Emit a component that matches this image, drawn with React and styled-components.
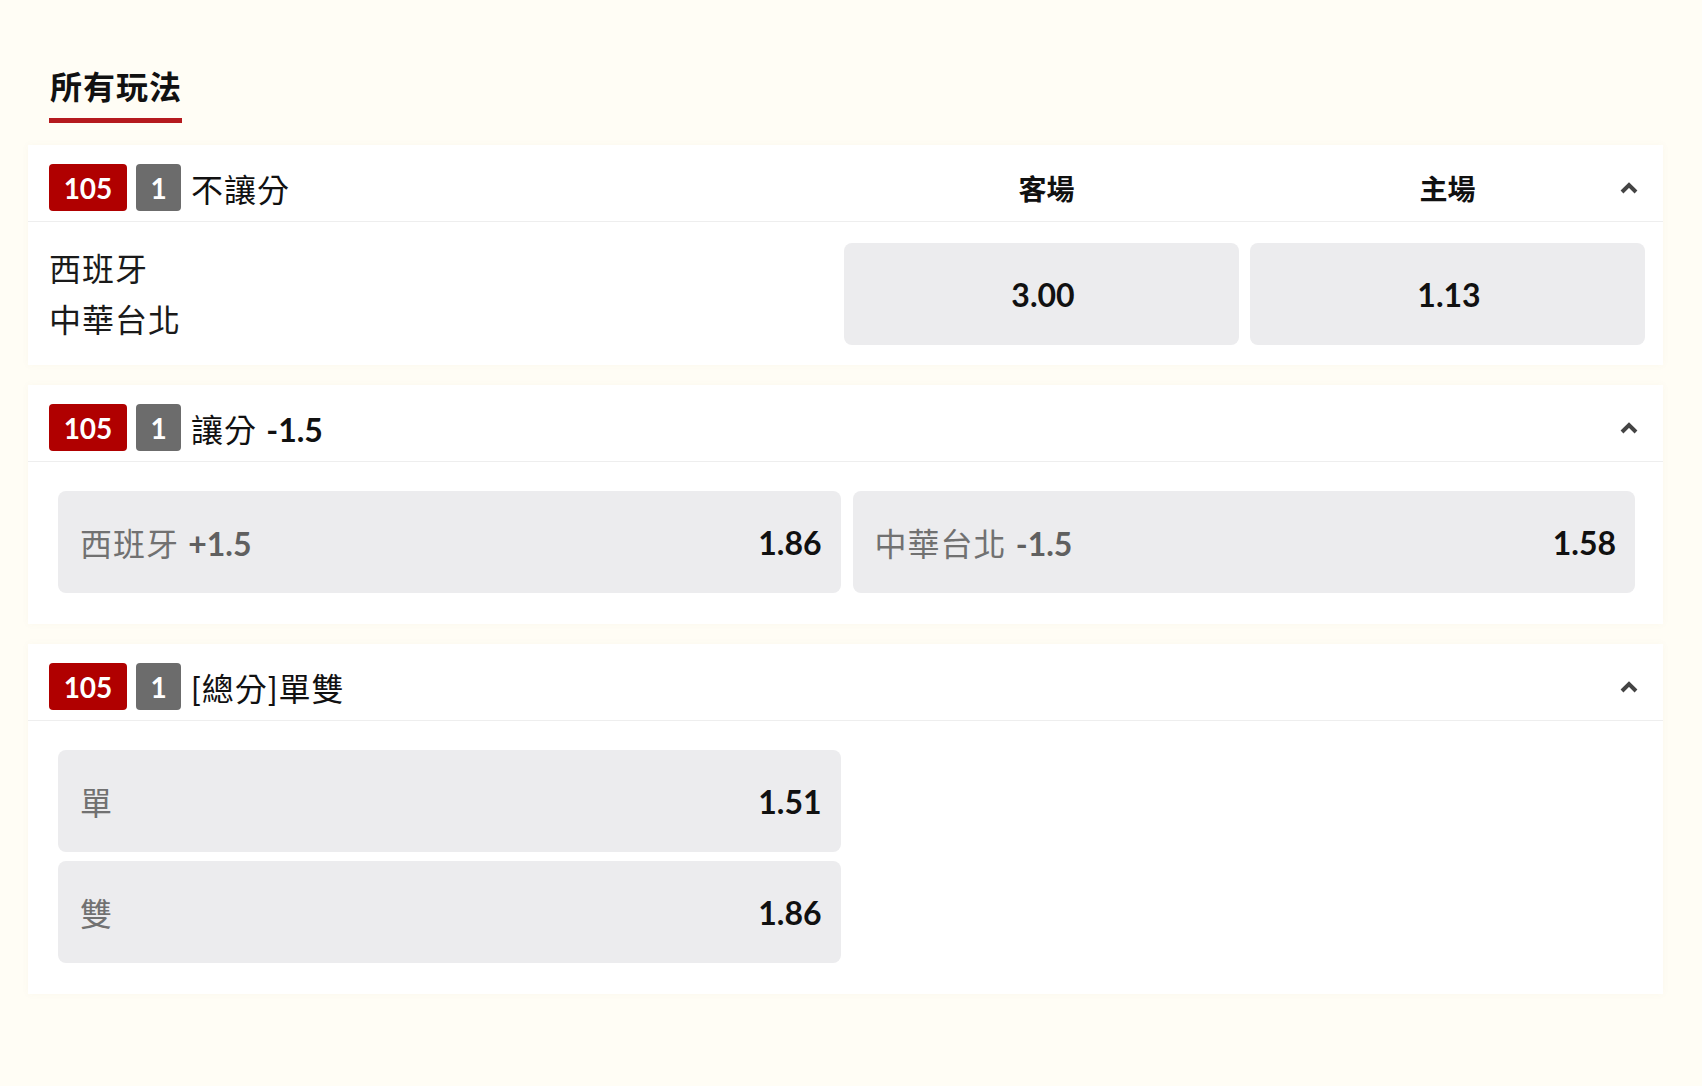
import React from 'react';
import styled, { createGlobalStyle } from 'styled-components';

const GlobalStyle = createGlobalStyle`
  body {
    margin: 0;
    background: #fffdf5;
    font-family: Lato, "Noto Sans CJK TC", sans-serif;
    color: #111;
  }
`;

const Page = styled.div`
  min-height: 100vh;
  box-sizing: border-box;
  padding: 67px 39px 40px 28px;
  display: flex;
  flex-direction: column;
  gap: 20px;
`;

const TabBar = styled.div`
  padding-left: 21px;
  margin-bottom: 2px;
`;

const Tab = styled.div`
  display: inline-block;
  padding: 0 0 11px 1px;
  font-size: 32px;
  line-height: 40px;
  font-weight: 700;
  letter-spacing: 1px;
  color: #111;
  border-bottom: 5px solid #b51a1e;
`;

const Card = styled.section`
  background: #fff;
  box-shadow: 0 0 8px rgba(120, 100, 40, 0.04);
`;

const Header = styled.div`
  display: grid;
  grid-template-columns: ${(p) => p.$cols};
  column-gap: 11px;
  align-items: center;
  padding: 19px 18px 10px 21px;
  border-bottom: 1px solid #eeeeee;
`;

const TitleWrap = styled.div`
  grid-column: 1;
  grid-row: 1;
  display: flex;
  align-items: center;
  gap: 9px;
`;

const Badge = styled.span`
  display: inline-flex;
  align-items: center;
  justify-content: center;
  height: 47px;
  min-width: ${(p) => p.$w}px;
  border-radius: 4px;
  background: ${(p) => (p.$grey ? '#6c6c6c' : '#b00000')};
  color: #fff;
  font-family: Lato, sans-serif;
  font-weight: 700;
  font-size: 28px;
`;

const Title = styled.span`
  margin-left: 1px;
  font-size: 32px;
  font-weight: 400;
  letter-spacing: 1px;
  color: #111;
  b {
    font-family: Lato, sans-serif;
    font-weight: 700;
    letter-spacing: 0;
  }
`;

const ColLabel = styled.div`
  grid-row: 1;
  grid-column: ${(p) => p.$col};
  padding-left: ${(p) => p.$shift || 0}px;
  text-align: center;
  font-size: 28px;
  font-weight: 700;
  color: #111;
`;

const Chevron = styled.svg`
  grid-row: 1;
  grid-column: ${(p) => p.$col};
  justify-self: end;
  margin-right: 6px;
  width: 20px;
  height: 14px;
`;

const MatchBody = styled.div`
  display: grid;
  grid-template-columns: 1fr 395px 395px;
  column-gap: 11px;
  align-items: center;
  padding: 21px 18px 20px 21px;
`;

const Teams = styled.div`
  display: flex;
  flex-direction: column;
  gap: 3px;
  font-size: 32px;
  line-height: 48px;
  letter-spacing: 1px;
  color: #1a1a1a;
`;

const OddsGrid = styled.div`
  display: grid;
  grid-template-columns: 1fr 1fr;
  column-gap: 12px;
  row-gap: 9px;
  padding: 29px 28px 31px 30px;
`;

const OddsButton = styled.button`
  all: unset;
  box-sizing: border-box;
  grid-column: ${(p) => p.$col || 'auto'};
  height: 102px;
  display: flex;
  align-items: center;
  justify-content: ${(p) => (p.$center ? 'center' : 'space-between')};
  padding: 0 19px 0 22px;
  border-radius: 8px;
  background: #ececee;
  cursor: pointer;
`;

const Label = styled.span`
  font-size: 32px;
  letter-spacing: 1px;
  color: #717171;
  b {
    font-family: Lato, sans-serif;
    font-weight: 700;
    letter-spacing: 0;
    color: #606060;
  }
`;

const Price = styled.span`
  font-family: Lato, sans-serif;
  font-weight: 700;
  font-size: 32px;
  color: #111;
`;

function Up({ col }) {
  return (
    <Chevron $col={col} viewBox="0 0 20 14">
      <polyline points="3,11 10,4 17,11" fill="none" stroke="#444" strokeWidth="4" strokeLinejoin="miter" />
    </Chevron>
  );
}

function MarketTitle({ children }) {
  return (
    <TitleWrap>
      <Badge $w={78}>105</Badge>
      <Badge $w={45} $grey>1</Badge>
      <Title>{children}</Title>
    </TitleWrap>
  );
}

export default function App() {
  return (
    <>
      <GlobalStyle />
      <Page>
        <TabBar>
          <Tab>所有玩法</Tab>
        </TabBar>

        <Card>
          <Header $cols="1fr 395px 395px">
            <MarketTitle>不讓分</MarketTitle>
            <ColLabel $col={2} $shift={10}>客場</ColLabel>
            <ColLabel $col={3}>主場</ColLabel>
            <Up col={3} />
          </Header>
          <MatchBody>
            <Teams>
              <div>西班牙</div>
              <div>中華台北</div>
            </Teams>
            <OddsButton $center>
              <Price>3.00</Price>
            </OddsButton>
            <OddsButton $center>
              <Price>1.13</Price>
            </OddsButton>
          </MatchBody>
        </Card>

        <Card>
          <Header $cols="1fr">
            <MarketTitle>
              讓分 <b>-1.5</b>
            </MarketTitle>
            <Up col={1} />
          </Header>
          <OddsGrid>
            <OddsButton>
              <Label>
                西班牙 <b>+1.5</b>
              </Label>
              <Price>1.86</Price>
            </OddsButton>
            <OddsButton>
              <Label>
                中華台北 <b>-1.5</b>
              </Label>
              <Price>1.58</Price>
            </OddsButton>
          </OddsGrid>
        </Card>

        <Card>
          <Header $cols="1fr">
            <MarketTitle>[總分]單雙</MarketTitle>
            <Up col={1} />
          </Header>
          <OddsGrid>
            <OddsButton $col={1}>
              <Label>單</Label>
              <Price>1.51</Price>
            </OddsButton>
            <OddsButton $col={1}>
              <Label>雙</Label>
              <Price>1.86</Price>
            </OddsButton>
          </OddsGrid>
        </Card>
      </Page>
    </>
  );
}
